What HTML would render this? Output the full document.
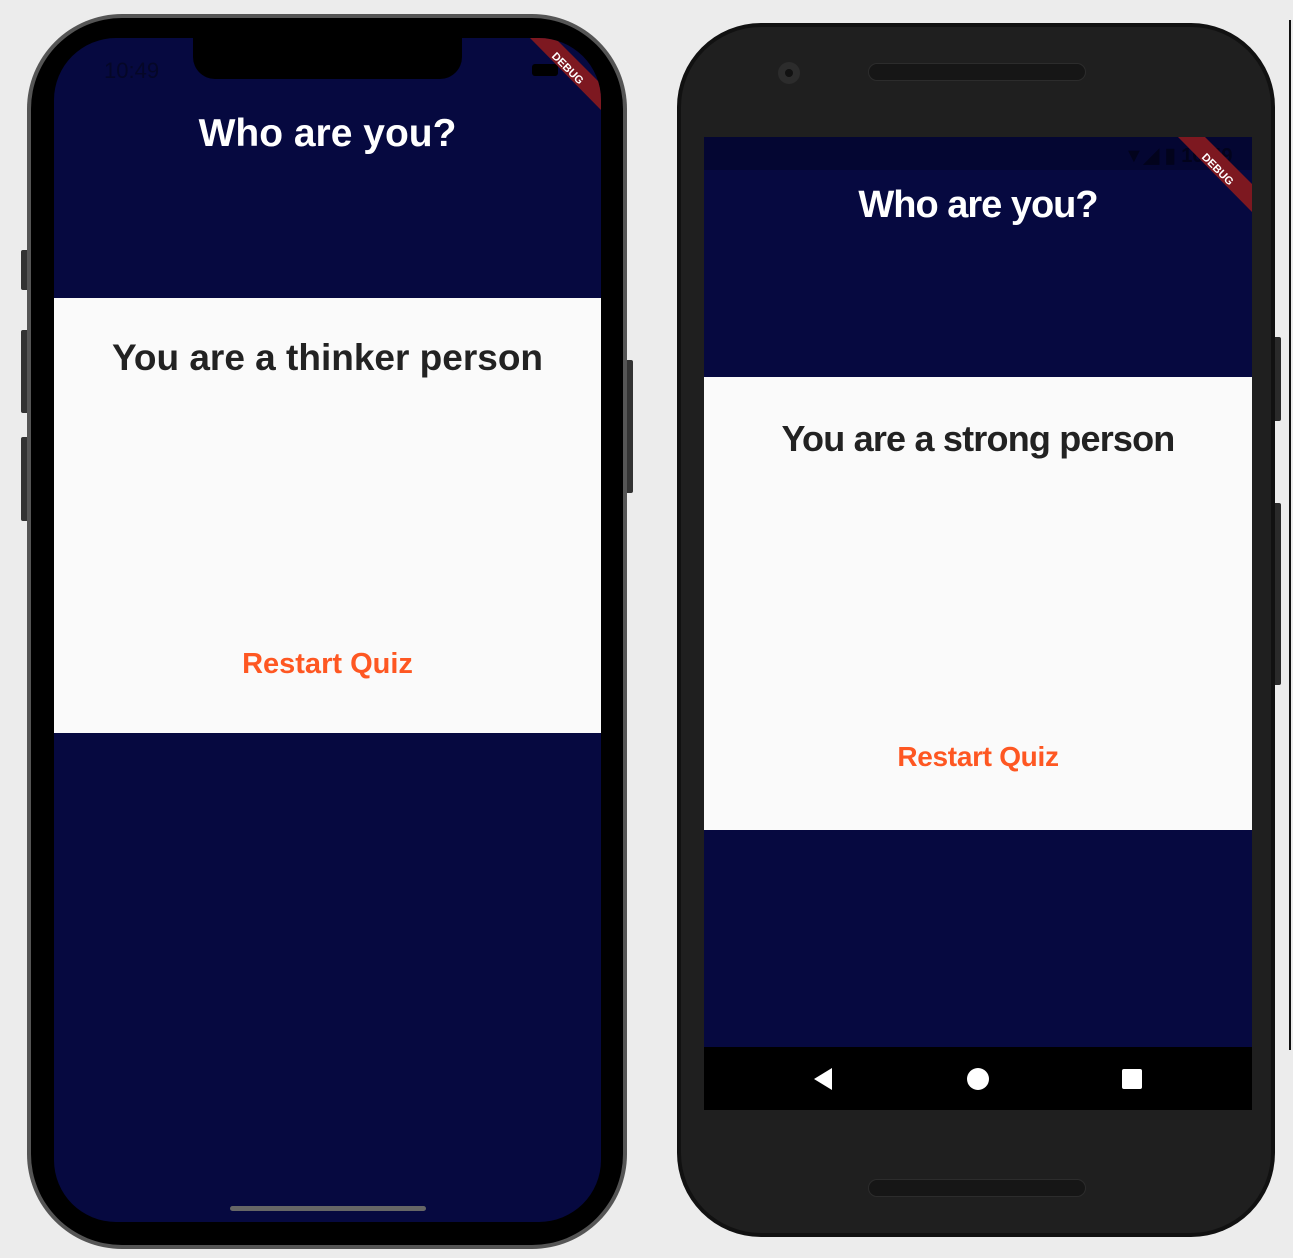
<!DOCTYPE html>
<html><head><meta charset="utf-8"><style>
*{margin:0;padding:0;box-sizing:border-box}
body{width:1293px;height:1258px;background:#ececec;position:relative;overflow:hidden;font-family:"Liberation Sans",sans-serif}
.a{position:absolute}
.t{position:absolute;left:0;right:0;text-align:center;font-weight:bold;white-space:nowrap}
</style></head><body>
<!-- left phone -->
<div class="a" style="left:21px;top:250px;width:9px;height:40px;background:#333;border-radius:2px"></div>
<div class="a" style="left:21px;top:330px;width:9px;height:83px;background:#333;border-radius:2px"></div>
<div class="a" style="left:21px;top:437px;width:9px;height:84px;background:#333;border-radius:2px"></div>
<div class="a" style="left:624px;top:360px;width:9px;height:133px;background:#333;border-radius:2px"></div>
<div class="a" style="left:27px;top:14px;width:600px;height:1235px;background:#555;border-radius:95px"></div>
<div class="a" style="left:31px;top:18px;width:592px;height:1227px;background:#000;border-radius:91px"></div>
<div class="a" style="left:54px;top:38px;width:547px;height:1184px;background:#060940;border-radius:62px;overflow:hidden">
  <div class="a" style="left:139px;top:0;width:269px;height:41px;background:#000;border-radius:0 0 22px 22px"></div>
  <div class="a" style="left:50px;top:20px;font-size:22px;color:#050727">10:49</div>
  <div class="a" style="left:478px;top:26px;width:26px;height:12px;background:#000;border-radius:3px"></div>
  <svg class="a" style="left:0;top:0" width="547" height="120"><polygon points="476,0 501,0 547,46 547,72" fill="#7d1820"/>
  <text x="0" y="0" transform="translate(514,30) rotate(45)" fill="#fff" font-size="11" font-weight="bold" text-anchor="middle" font-family="Liberation Sans" dy="4">DEBUG</text></svg>
  <div class="t" style="top:74px;font-size:39px;color:#fff">Who are you?</div>
  <div class="a" style="left:0;top:260px;width:547px;height:435px;background:#fafafa">
    <div class="t" style="top:39px;font-size:37px;color:#222">You are a thinker person</div>
    <div class="t" style="top:350px;font-size:29px;color:#fe5722">Restart Quiz</div>
  </div>
  <div class="a" style="left:176px;top:1168px;width:196px;height:5px;background:#666;border-radius:3px"></div>
</div>
<!-- right phone -->
<div class="a" style="left:1272px;top:337px;width:9px;height:84px;background:#2a2a2a;border-radius:2px"></div>
<div class="a" style="left:1272px;top:503px;width:9px;height:182px;background:#2a2a2a;border-radius:2px"></div>
<div class="a" style="left:1289px;top:20px;width:2px;height:1030px;background:#111"></div>
<div class="a" style="left:677px;top:23px;width:598px;height:1214px;background:#111;border-radius:84px"></div>
<div class="a" style="left:681px;top:27px;width:590px;height:1206px;background:#1f1f1f;border-radius:80px"></div>
<div class="a" style="left:778px;top:62px;width:22px;height:22px;background:#2c2c2c;border-radius:50%"></div>
<div class="a" style="left:785px;top:69px;width:8px;height:8px;background:#111;border-radius:50%"></div>
<div class="a" style="left:868px;top:63px;width:218px;height:18px;background:#161616;border-radius:9px;border:1px solid #2c2c2c"></div>
<div class="a" style="left:868px;top:1179px;width:218px;height:18px;background:#161616;border-radius:9px;border:1px solid #2c2c2c"></div>
<div class="a" style="left:704px;top:137px;width:548px;height:973px;background:#060940;overflow:hidden">
  <div class="a" style="left:0;top:0;width:548px;height:33px;background:#040632"></div>
  <div class="a" style="left:420px;top:6px;font-size:20px;color:#02031c;font-weight:bold;white-space:nowrap">▼◢ ▮ 10:49</div>
  <svg class="a" style="left:0;top:0" width="548" height="100"><polygon points="474,0 501,0 548,47 548,75" fill="#7d1820"/>
  <text x="0" y="0" transform="translate(514,32) rotate(45)" fill="#fff" font-size="11" font-weight="bold" text-anchor="middle" font-family="Liberation Sans" dy="4">DEBUG</text></svg>
  <div class="t" style="top:47px;font-size:38px;color:#fff;letter-spacing:-1px">Who are you?</div>
  <div class="a" style="left:0;top:240px;width:548px;height:453px;background:#fafafa">
    <div class="t" style="top:41px;font-size:36px;color:#222;letter-spacing:-0.8px">You are a strong person</div>
    <div class="t" style="top:364px;font-size:28px;color:#fe5722;letter-spacing:-0.3px">Restart Quiz</div>
  </div>
  <div class="a" style="left:0;top:910px;width:548px;height:63px;background:#000">
    <svg class="a" style="left:108px;top:20px" width="22" height="24"><path d="M20 1 L2 12 L20 23 Z" fill="#fff"/></svg>
    <div class="a" style="left:263px;top:21px;width:22px;height:22px;background:#fff;border-radius:50%"></div>
    <div class="a" style="left:418px;top:22px;width:20px;height:20px;background:#fff;border-radius:2px"></div>
  </div>
</div>
</body></html>
